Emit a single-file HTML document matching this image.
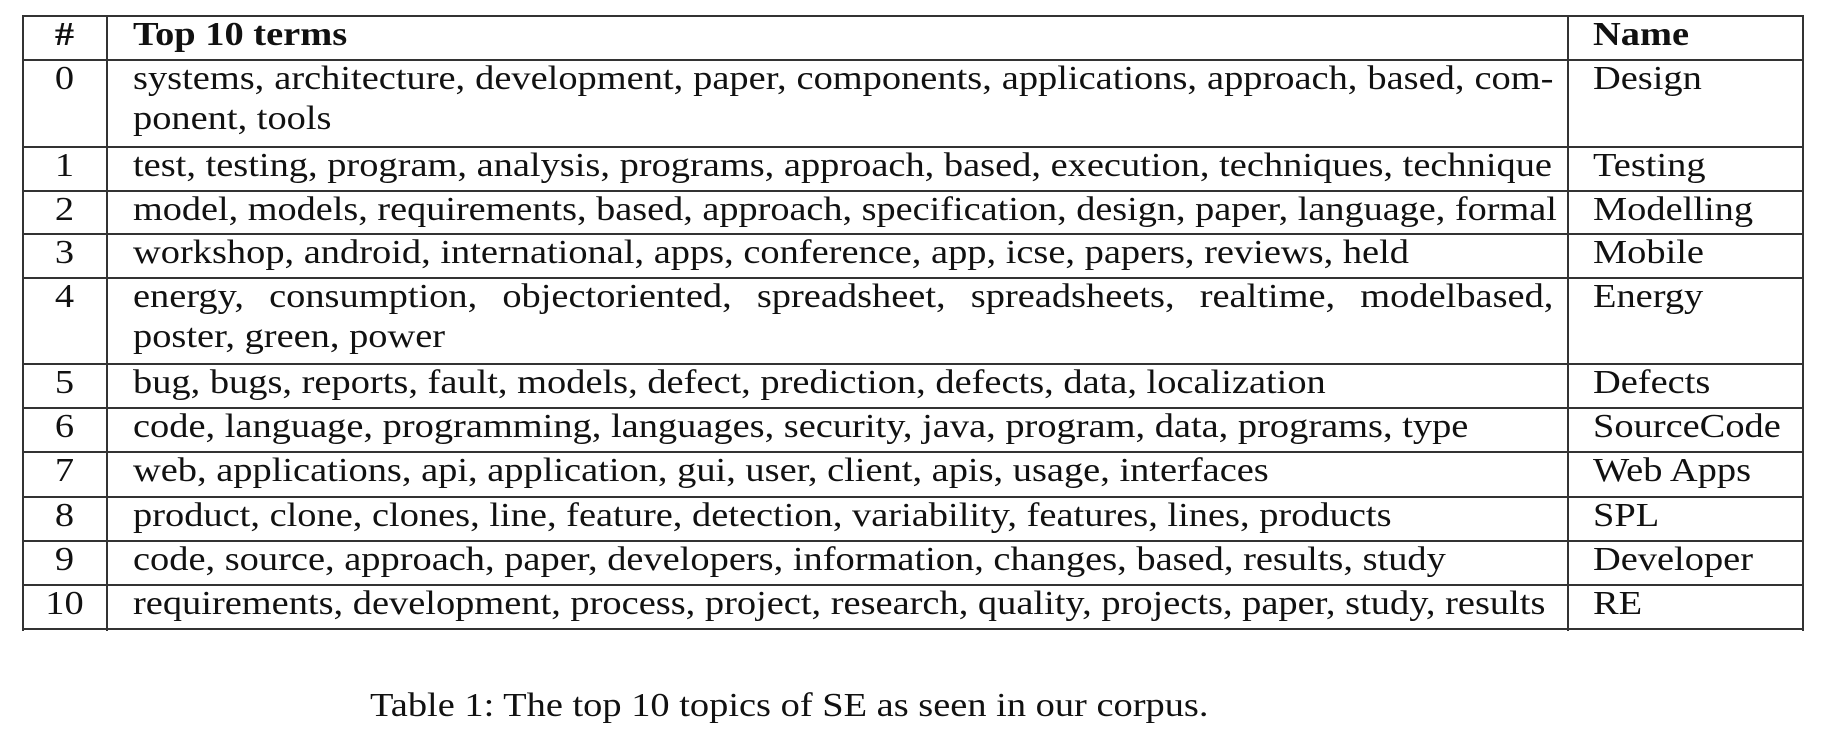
<!DOCTYPE html>
<html><head><meta charset="utf-8"><style>
body{margin:0;background:#fff;width:1824px;height:748px;position:relative;overflow:hidden;font-family:"Liberation Serif",serif;font-size:34px;color:#111}
.h{position:absolute;left:22px;width:1782px;height:2px;background:#333}
.v{position:absolute;top:15px;height:616px;width:2px;background:#333}
.c{position:absolute;line-height:40px;white-space:nowrap;transform:scaleX(1.13);transform-origin:0 0}
.n{left:22px;width:75px;text-align:center;transform-origin:50% 0}
.t{left:133px;width:1257px}
.m{left:1593px}
.j{text-align:justify;text-align-last:justify;white-space:normal}
b{font-weight:bold}
</style></head><body>
<div class="h" style="top:15px"></div>
<div class="h" style="top:59px"></div>
<div class="h" style="top:146px"></div>
<div class="h" style="top:190px"></div>
<div class="h" style="top:233px"></div>
<div class="h" style="top:277px"></div>
<div class="h" style="top:363px"></div>
<div class="h" style="top:407px"></div>
<div class="h" style="top:451px"></div>
<div class="h" style="top:496px"></div>
<div class="h" style="top:540px"></div>
<div class="h" style="top:584px"></div>
<div class="h" style="top:628px"></div>
<div class="v" style="left:22px"></div>
<div class="v" style="left:106px"></div>
<div class="v" style="left:1567px"></div>
<div class="v" style="left:1802px"></div>

<div class="c n" style="top:15px;left:27px"><b>#</b></div><div class="c t" style="top:15px"><b>Top 10 terms</b></div><div class="c m" style="top:15px"><b>Name</b></div>

<div class="c n" style="top:59px;left:27px">0</div><div class="c t" style="top:59px"><div class="j">systems, architecture, development, paper, components, applications, approach, based, com-</div><div>ponent, tools</div></div><div class="c m" style="top:59px">Design</div>

<div class="c n" style="top:146px;left:27px">1</div><div class="c t" style="top:146px">test, testing, program, analysis, programs, approach, based, execution, techniques, technique</div><div class="c m" style="top:146px">Testing</div>

<div class="c n" style="top:190px;left:27px">2</div><div class="c t" style="top:190px;transform:scaleX(1.125)">model, models, requirements, based, approach, specification, design, paper, language, formal</div><div class="c m" style="top:190px">Modelling</div>

<div class="c n" style="top:233px;left:27px">3</div><div class="c t" style="top:233px">workshop, android, international, apps, conference, app, icse, papers, reviews, held</div><div class="c m" style="top:233px">Mobile</div>

<div class="c n" style="top:277px;left:27px">4</div><div class="c t" style="top:277px"><div class="j">energy, consumption, objectoriented, spreadsheet, spreadsheets, realtime, modelbased,</div><div>poster, green, power</div></div><div class="c m" style="top:277px">Energy</div>

<div class="c n" style="top:363px;left:27px">5</div><div class="c t" style="top:363px">bug, bugs, reports, fault, models, defect, prediction, defects, data, localization</div><div class="c m" style="top:363px">Defects</div>

<div class="c n" style="top:407px;left:27px">6</div><div class="c t" style="top:407px">code, language, programming, languages, security, java, program, data, programs, type</div><div class="c m" style="top:407px">SourceCode</div>

<div class="c n" style="top:451px;left:27px">7</div><div class="c t" style="top:451px">web, applications, api, application, gui, user, client, apis, usage, interfaces</div><div class="c m" style="top:451px">Web Apps</div>

<div class="c n" style="top:496px;left:27px">8</div><div class="c t" style="top:496px">product, clone, clones, line, feature, detection, variability, features, lines, products</div><div class="c m" style="top:496px">SPL</div>

<div class="c n" style="top:540px;left:27px">9</div><div class="c t" style="top:540px">code, source, approach, paper, developers, information, changes, based, results, study</div><div class="c m" style="top:540px">Developer</div>

<div class="c n" style="top:584px;left:27px">10</div><div class="c t" style="top:584px">requirements, development, process, project, research, quality, projects, paper, study, results</div><div class="c m" style="top:584px">RE</div>

<div class="c" style="left:370px;top:686px">Table 1: The top 10 topics of SE as seen in our corpus.</div>
</body></html>
